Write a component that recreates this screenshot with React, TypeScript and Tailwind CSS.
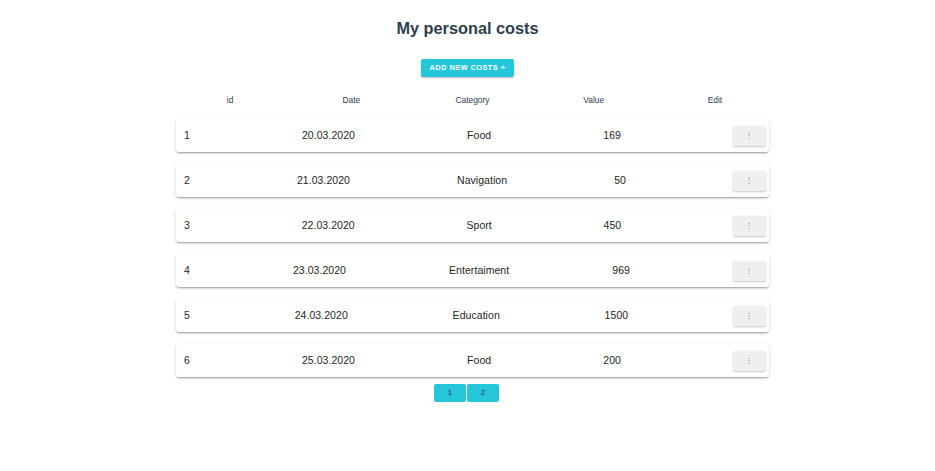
import React from "react"

const costs = [
  { id: 1, date: "20.03.2020", category: "Food", value: 169 },
  { id: 2, date: "21.03.2020", category: "Navigation", value: 50 },
  { id: 3, date: "22.03.2020", category: "Sport", value: 450 },
  { id: 4, date: "23.03.2020", category: "Entertaiment", value: 969 },
  { id: 5, date: "24.03.2020", category: "Education", value: 1500 },
  { id: 6, date: "25.03.2020", category: "Food", value: 200 },
]

const headers = ["id", "Date", "Category", "Value", "Edit"]

export default function App() {
  return (
    <div className="min-h-[471px] w-full bg-white font-['Liberation_Sans',Arial,sans-serif] text-[#2c3e50]">
      <div className="flex flex-col items-center pt-[17px]">
        <h1 className="text-[16.3px] font-bold leading-[22px]">My personal costs</h1>

        <button className="mt-[20px] h-[18px] w-[93px] rounded-[2px] bg-[#26c6da] text-[7.4px] font-bold uppercase tracking-[0.06em] text-white shadow-[0_1px_2px_rgba(0,0,0,0.25)]">
          Add new costs +
        </button>

        <div className="mt-[16px] w-[606px] translate-x-[5px]">
          <div className="grid grid-cols-5 text-center text-[8.4px] leading-[14px] text-[#2c3e50]">
            {headers.map((h) => (
              <div key={h}>{h}</div>
            ))}
          </div>

          <div className="mt-[12px] flex flex-col gap-[12px] px-[6.5px]">
            {costs.map((c) => (
              <div
                key={c.id}
                className="flex h-[33px] items-center justify-between rounded-[3px] bg-white pl-[8px] pr-[3px] text-[10.5px] tracking-[0.005em] text-[#262626] shadow-[0_2px_2px_-1px_rgba(0,0,0,0.25),0_1px_2px_0_rgba(0,0,0,0.14),0_1px_4px_0_rgba(0,0,0,0.08)]"
              >
                <span>{c.id}</span>
                <span>{c.date}</span>
                <span>{c.category}</span>
                <span>{c.value}</span>
                <button className="flex h-[20px] w-[33px] items-center justify-center rounded-[2px] bg-[#efefef] text-[8px] text-[#777] shadow-[0_1px_2px_rgba(0,0,0,0.22)]">
                  ⋮
                </button>
              </div>
            ))}
          </div>
        </div>

        <div className="mt-[7px] flex -translate-x-[1px] gap-[1px]">
          <button className="h-[18px] w-[32px] rounded-[2px] bg-[#26c6da] text-[8px] text-[#333]">1</button>
          <button className="h-[18px] w-[32px] rounded-[2px] bg-[#26c6da] text-[8px] text-[#333]">2</button>
        </div>
      </div>
    </div>
  )
}
